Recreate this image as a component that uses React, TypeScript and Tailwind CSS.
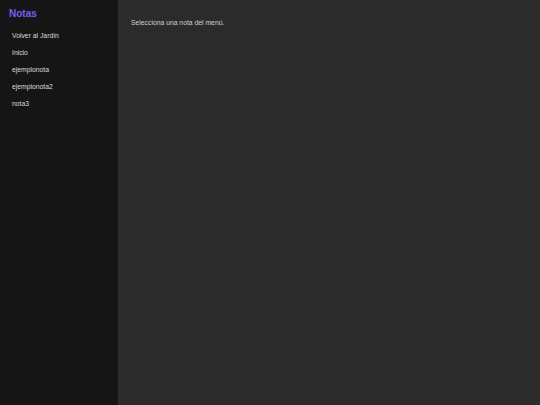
import React from 'react';

const notes = ['Volver al Jardín', 'Inicio', 'ejemplonota', 'ejemplonota2', 'nota3'];

const App: React.FC = () => {
  return (
    <div className="flex h-[405px] w-full font-['Liberation_Sans',Arial,sans-serif]">
      <aside className="w-[118px] shrink-0 bg-[#151515] px-2 pt-[6px]">
        <h1 className="pl-px text-[10px] font-bold leading-[16px] text-[#7b5cf0]">Notas</h1>
        <ul className="mt-[4.5px] flex flex-col">
          {notes.map((n) => (
            <li key={n} className="h-[17px] px-1 text-[6.8px] leading-[17px] text-[#dadada]">
              {n}
            </li>
          ))}
        </ul>
      </aside>
      <main className="flex-1 bg-[#2b2b2b] px-[13px] pt-[18px]">
        <p className="text-[6.8px] leading-[10px] text-[#cfcfcf]">Selecciona una nota del menú.</p>
      </main>
    </div>
  );
};

export default App;
